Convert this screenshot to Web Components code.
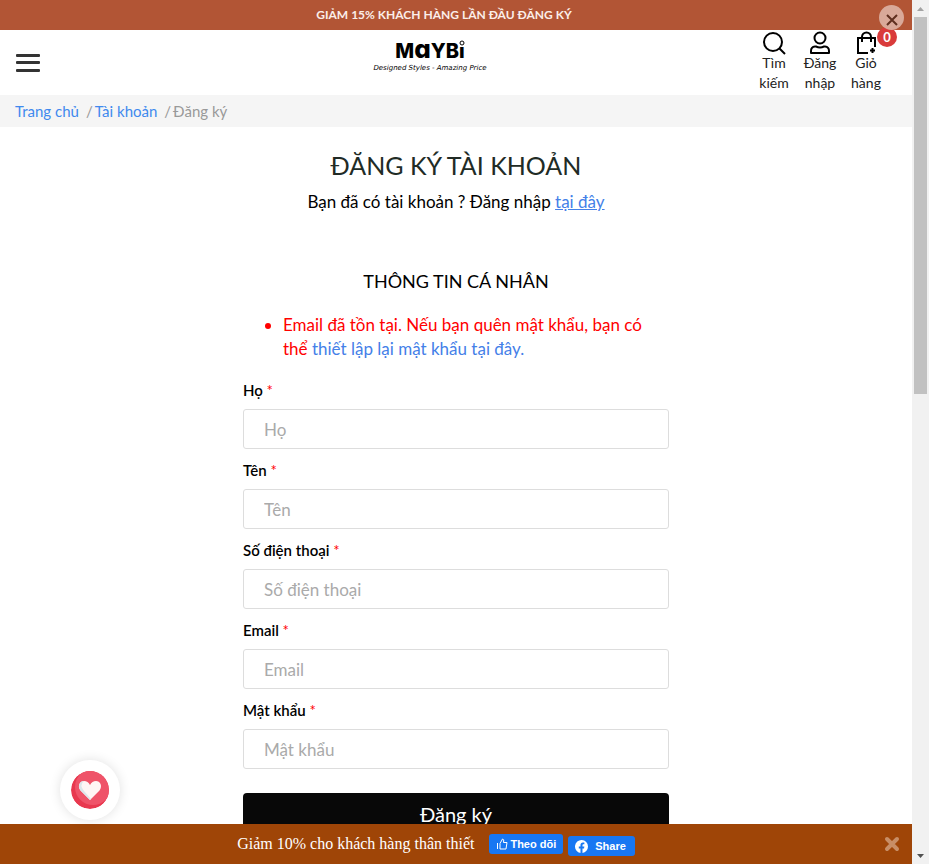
<!DOCTYPE html>
<html lang="vi">
<head>
<meta charset="utf-8">
<meta name="viewport" content="width=device-width, initial-scale=1">
<title>Đăng ký tài khoản</title>
<style>
  body { margin: 0; font-family: Lato, "Open Sans", sans-serif; color: #000; background: #fff; }
</style>
</head>
<body>
<shop-shell>
  <promo-bar slot="top">GIẢM 15% KHÁCH HÀNG LẦN ĐẦU ĐĂNG KÝ</promo-bar>
  <shop-header slot="top"></shop-header>
  <shop-breadcrumb slot="top"></shop-breadcrumb>
  <register-form>
    <form-field label="Họ" name="lastName"></form-field>
    <form-field label="Tên" name="firstName"></form-field>
    <form-field label="Số điện thoại" name="phone" type="tel"></form-field>
    <form-field label="Email" name="email" type="email"></form-field>
    <form-field label="Mật khẩu" name="password" type="password"></form-field>
  </register-form>
  <wish-button slot="float"></wish-button>
  <social-bar slot="bottom">Giảm 10% cho khách hàng thân thiết</social-bar>
</shop-shell>
<script>
const define = (name, html, setup) => {
  const template = document.createElement('template');
  template.innerHTML = html;
  customElements.define(name, class extends HTMLElement {
    constructor() {
      super();
      this.attachShadow({ mode: 'open' }).append(template.content.cloneNode(true));
    }
    connectedCallback() { if (setup) setup(this, this.shadowRoot); }
  });
};

define('scroll-track', `
<style>
  :host { display: flex; flex-direction: column; background: #f1f1f1; }
  .cap { height: 17px; display: grid; place-items: center; flex: none; }
  .lane { flex: 1; padding: 0 2px; }
  .thumb { height: 45.4%; background: #c1c1c1; }
  svg { display: block; }
</style>
<div class="cap"><svg width="7" height="4"><path d="M0 4L3.5 0L7 4z" fill="#a3a3a3"/></svg></div>
<div class="lane"><div class="thumb"></div></div>
<div class="cap"><svg width="7" height="4"><path d="M0 0L3.5 4L7 0z" fill="#505050"/></svg></div>`);

define('shop-shell', `
<style>
  :host { display: grid; grid-template-columns: minmax(0, 1fr) 17px; height: 100vh; overflow: hidden; }
  .page { position: relative; display: flex; flex-direction: column; min-height: 0; }
  main { flex: 1; min-height: 0; overflow: hidden; }
</style>
<div class="page">
  <slot name="top"></slot>
  <main><slot></slot></main>
  <slot name="bottom"></slot>
  <slot name="float"></slot>
</div>
<scroll-track></scroll-track>`);

define('promo-bar', `
<style>
  :host { position: relative; display: block; background: #b25535; color: #fbeee9; }
  p { margin: 0; padding: 0 40px 0 16px; text-align: center; font-size: 12px; line-height: 30px; font-weight: 700; }
  button { position: absolute; z-index: 1; top: 5px; right: 8px; width: 25px; height: 25px; padding: 4px 0 0; border: 0; border-radius: 50%; background: #d9a999; display: grid; place-items: center; }
</style>
<p><slot></slot></p>
<button aria-label="Đóng"><svg width="12" height="12" viewBox="0 0 12 12" stroke="#5f2f1f" stroke-width="2"><path d="M1 1l10 10M11 1L1 11"/></svg></button>`);

define('shop-logo', `
<style>
  :host { display: block; }
  a { display: flex; flex-direction: column; align-items: center; color: #000; text-decoration: none; }
  .name { position: relative; font: 800 20px/20px Inter, sans-serif; font-feature-settings: "cv11"; }
  .big { font-size: 26px; line-height: 0; }
  .dot { position: absolute; top: -1px; right: 0; }
  .tag { font: italic 400 7px/14px "DejaVu Sans", sans-serif; white-space: nowrap; }
</style>
<a href="#"><span class="name">M<span class="big">a</span>YBı<svg class="dot" width="6" height="6"><circle cx="3" cy="3" r="2" fill="#fff" stroke="#000"/></svg></span><span class="tag">Designed Styles - Amazing Price</span></a>`);

define('header-action', `
<style>
  :host { display: block; }
  a { position: relative; display: flex; flex-direction: column; align-items: center; width: 46px; padding-top: 1px; color: #222; text-decoration: none; text-align: center; font-size: 14px; line-height: 20px; }
  .label { padding: 0 4px; margin-top: -2px; }
  ::slotted(svg) { display: block; width: 24px; height: 24px; fill: none; stroke: #000; stroke-width: 2; }
  ::slotted(b) { position: absolute; top: -3px; right: -8px; width: 20px; border-radius: 50%; background: #d93b3b; color: #fff; font-size: 13px; font-weight: 700; line-height: 20px; }
</style>
<a href="#"><slot name="icon"></slot><span class="label"><slot></slot></span><slot name="badge"></slot></a>`);

define('shop-header', `
<style>
  :host { display: grid; grid-template-columns: 1fr auto 1fr; height: 65px; background: #fff; }
  .menu { justify-self: start; align-self: center; margin-left: 16px; padding: 0; border: 0; background: none; }
  .menu svg { display: block; }
  shop-logo { margin-top: 11px; margin-right: 52px; }
  nav { display: flex; justify-content: flex-end; padding-right: 23px; }
</style>
<button class="menu" aria-label="Menu"><svg width="24" height="18" fill="#333"><rect width="24" height="3" rx="1"/><rect y="7" width="24" height="3" rx="1"/><rect y="15" width="24" height="3" rx="1"/></svg></button>
<shop-logo></shop-logo>
<nav>
  <header-action><svg slot="icon" viewBox="0 0 24 24"><circle cx="11" cy="11" r="9"/><path d="M17.5 17.5L23 23"/></svg>Tìm kiếm</header-action>
  <header-action><svg slot="icon" viewBox="0 0 24 24"><circle cx="12" cy="7" r="5.500"/><path d="M3 22v-2q0-4 4-4.500h1q4 2 8 0h1q4 .5 4 4.500v2z" stroke-linejoin="round"/></svg>Đăng nhập</header-action>
  <header-action><svg slot="icon" viewBox="0 0 24 24"><path d="M14 22H4V7h17v9M8 11V6a4.500 4.500 0 0 1 9 0v5M18.500 17v5M16 19.500h5"/></svg>Giỏ hàng<b slot="badge">0</b></header-action>
</nav>`);

define('shop-breadcrumb', `
<style>
  :host { display: block; background: #f5f5f5; }
  nav { display: flex; padding: 1px 15px 0; font-size: 15px; line-height: 31px; color: #999; }
  a { color: #4089ee; text-decoration: none; }
  i { font-style: normal; padding: 0 2px 0 7px; }
</style>
<nav aria-label="Breadcrumb"><a href="#">Trang chủ</a><i>/</i><a href="#">Tài khoản</a><i>/</i><span>Đăng ký</span></nav>`);

define('form-field', `
<style>
  :host { display: block; }
  label { display: block; font-size: 15px; line-height: 20px; font-weight: 600; }
  span { color: red; font-weight: 400; }
  input { display: block; box-sizing: border-box; width: 100%; height: 40px; margin: 9px 0 11px; padding: 0 20px; border: 1px solid #ddd; border-radius: 3px; background: #fff; font: inherit; font-size: 17px; color: #333; outline: 0; }
  input::placeholder { color: #aaa; opacity: 1; }
</style>
<label for="field"><slot></slot> <span>*</span></label>
<input id="field">`, (host, root) => {
  const label = host.getAttribute('label');
  const input = root.querySelector('input');
  root.querySelector('slot').textContent = label;
  input.placeholder = label;
  input.name = host.getAttribute('name');
  input.type = host.getAttribute('type') || 'text';
});

define('register-form', `
<style>
  :host { display: block; padding: 20px 15px; }
  .intro { text-align: center; }
  h1 { margin: 0; font-size: 25px; line-height: 36px; font-weight: 400; color: #212b25; }
  p { margin: 7px 0 0; font-size: 17px; line-height: 24px; }
  a { color: #4480e8; }
  form { max-width: 426px; margin: 53px auto 0; }
  h2 { margin: 0 0 18px; text-align: center; font-size: 18px; line-height: 28px; font-weight: 400; }
  ul { margin: 0 0 19px; padding: 0 20px 0 40px; color: red; font-size: 17px; line-height: 24px; }
  li a { text-decoration: none; }
  button { display: block; width: 100%; height: 42px; margin-top: 24px; padding: 0; border: 0; border-radius: 4px; background: #080808; color: #fff; font: inherit; font-size: 20px; }
</style>
<div class="intro"><h1>ĐĂNG KÝ TÀI KHOẢN</h1><p>Bạn đã có tài khoản ? Đăng nhập <a href="#">tại đây</a></p></div>
<form>
  <h2>THÔNG TIN CÁ NHÂN</h2>
  <ul><li><span>Email đã tồn tại. Nếu bạn quên mật khẩu, bạn có</span> <span>thể</span> <a href="#">thiết lập lại mật khẩu tại đây.</a></li></ul>
  <slot></slot>
  <button type="button">Đăng ký</button>
</form>`);

define('wish-button', `
<style>
  :host { position: absolute; left: 60px; bottom: 44px; }
  button { display: grid; place-items: center; width: 60px; height: 60px; padding: 0; border: 0; border-radius: 50%; background: #fff; box-shadow: 0 0 12px rgba(0, 0, 0, .12); }
  svg { border-radius: 50%; }
</style>
<button aria-label="Yêu thích"><svg width="38" height="38" viewBox="0 0 38 38"><circle cx="19" cy="19" r="19" fill="#e8384f"/><circle cx="22" cy="16" r="18" fill="#ef5369"/><path d="M19 29L9.500 19.500C6 15 9 10 13 10q4 0 6 4q2-4 6-4c4 0 7 5 3.500 9.500z" fill="#fff5f5"/><path d="M13 10q-5 4 0 10l7 8l-1 1L9.500 19.500C6 15 9 10 13 10z" fill="#dce6eb"/></svg></button>`);

define('social-bar', `
<style>
  :host { display: flex; align-items: center; justify-content: center; position: relative; height: 40px; background: #9f4507; color: #fff; font: 16px/20px "Liberation Serif", serif; }
  .row { display: flex; align-items: center; padding-right: 40px; }
  button { display: flex; align-items: center; height: 20px; padding: 0 7px; border: 0; border-radius: 3px; background: #1877f2; color: #fff; font: 700 11px/20px "Liberation Sans", sans-serif; }
  .follow { margin: 0 5px 0 15px; gap: 2px; }
  .share { gap: 7px; padding-right: 9px; margin-top: 4px; }
  .close { position: absolute; right: 12px; top: 12px; height: 16px; padding: 0; background: none; }
</style>
<div class="row"><span><slot></slot></span>
<button class="follow"><svg width="12" height="12" viewBox="0 0 12 12" fill="none" stroke="#fff"><path d="M1.500 5v6M4 5.500L6.500 1Q8.500 1 7.500 4.500H11L10 11H4z" stroke-linejoin="round"/></svg>Theo dõi</button>
<button class="share"><svg width="13" height="13" viewBox="0 0 24 24"><path d="M24 12a12 12 0 1 0-13.900 11.900v-8.400H7V12h3.100V9.400c0-3 1.800-4.700 4.500-4.700 1.300 0 2.700.2 2.700.2v3h-1.500c-1.500 0-2 .9-2 1.900V12h3.400l-.5 3.500h-2.900v8.400A12 12 0 0 0 24 12z" fill="#fff"/></svg>Share</button></div>
<button class="close" aria-label="Đóng"><svg width="16" height="16" stroke="#c88e66" stroke-width="4" stroke-linecap="round"><path d="M3 3l10 10M13 3L3 13"/></svg></button>`);
</script>
</body>
</html>
